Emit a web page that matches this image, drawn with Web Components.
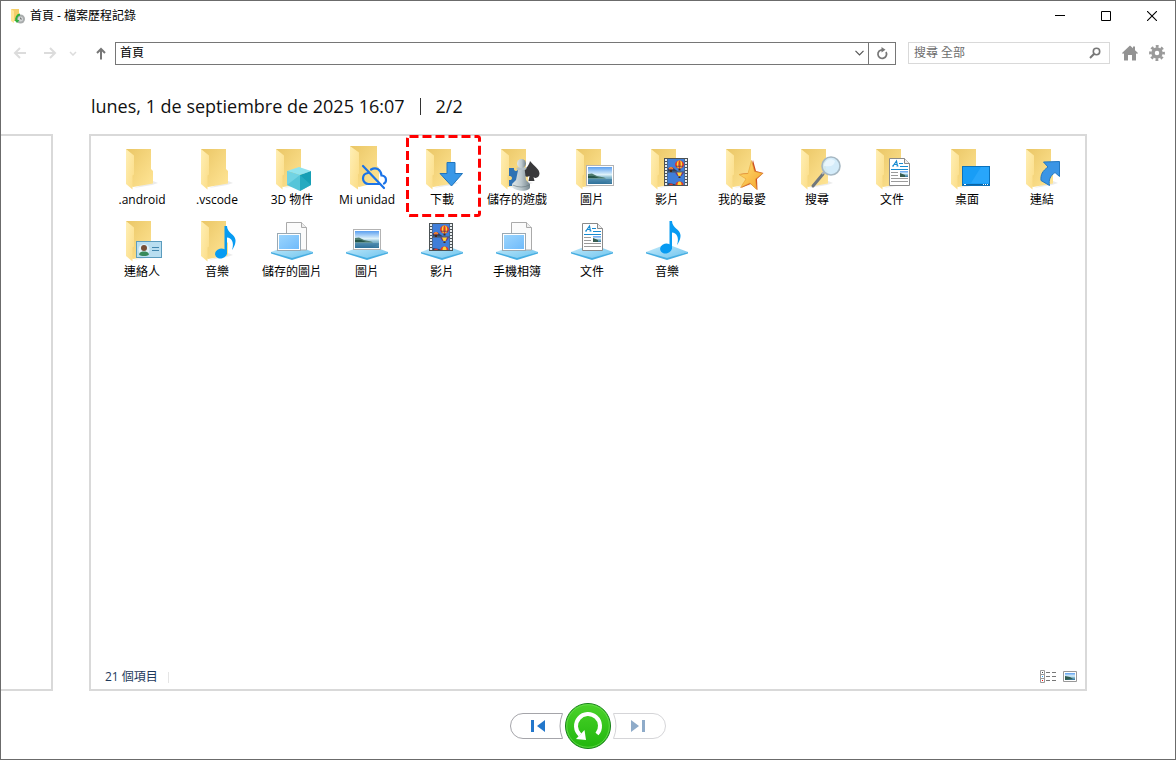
<!DOCTYPE html>
<html lang="zh-Hant">
<head>
<meta charset="utf-8">
<title>首頁 - 檔案歷程記錄</title>
<style>
html, body { margin: 0; }
body { font: 12px/16px "Open Sans", "Noto Sans CJK TC", sans-serif; color: #000; background: #fff; }
</style>
</head>
<body>
<fh-window>
  <fh-titlebar slot="title">首頁 - 檔案歷程記錄</fh-titlebar>
  <fh-toolbar slot="toolbar"></fh-toolbar>
  <fh-snapshot date="lunes, 1 de septiembre de 2025 16:07" position="2/2" count="21 個項目">
    <fh-item icon="plain">.android</fh-item>
    <fh-item icon="plain">.vscode</fh-item>
    <fh-item icon="cube">3D 物件</fh-item>
    <fh-item icon="drive">Mi unidad</fh-item>
    <fh-item icon="download" marked>下載</fh-item>
    <fh-item icon="games">儲存的遊戲</fh-item>
    <fh-item icon="pictures">圖片</fh-item>
    <fh-item icon="videos">影片</fh-item>
    <fh-item icon="star">我的最愛</fh-item>
    <fh-item icon="search">搜尋</fh-item>
    <fh-item icon="documents">文件</fh-item>
    <fh-item icon="desktop">桌面</fh-item>
    <fh-item icon="links">連結</fh-item>
    <fh-item icon="contacts">連絡人</fh-item>
    <fh-item icon="music">音樂</fh-item>
    <fh-item icon="lib-saved">儲存的圖片</fh-item>
    <fh-item icon="lib-pictures">圖片</fh-item>
    <fh-item icon="lib-videos">影片</fh-item>
    <fh-item icon="lib-saved">手機相簿</fh-item>
    <fh-item icon="lib-documents">文件</fh-item>
    <fh-item icon="lib-music">音樂</fh-item>
  </fh-snapshot>
  <fh-playback slot="footer"></fh-playback>
</fh-window>

<script>
function define(name, html, setup) {
  customElements.define(name, class extends HTMLElement {
    constructor() {
      super();
      this.attachShadow({ mode: 'open' });
    }
    connectedCallback() {
      this.shadowRoot.innerHTML = html;
      if (setup) setup(this, this.shadowRoot);
    }
  });
}

const RESET = `
  * { box-sizing: border-box; }
  svg { display: block; }
  button { display: grid; place-items: center; margin: 0; padding: 0; border: 0; background: none; font: inherit; color: inherit; }
  input { margin: 0; border: 0; background: none; font: inherit; color: inherit; outline: 0; min-width: 0; }
`;

define('fh-window', `
<style>${RESET}
  :host { display: flex; flex-direction: column; box-sizing: border-box; min-height: 100vh; border: 1px solid #6b6b6b; background: #fff; }
  main { flex: 1; display: flex; }
</style>
<slot name="title"></slot>
<slot name="toolbar"></slot>
<main><slot></slot></main>
<slot name="footer"></slot>`);

define('fh-titlebar', `
<style>${RESET}
  :host { display: flex; align-items: center; height: 30px; padding-left: 10px; }
  h1 { flex: 1; margin: 0 0 0 5px; font-size: 12px; line-height: 16px; font-weight: 400; }
  button { width: 46px; height: 28px; }
</style>
<svg width="14" height="16" viewBox="0 0 14 16">
  <path d="M0 1h8v12H1L0 12z" fill="#f4cf6a"/><path d="M0 1l3 2v12l-3-2z" fill="#ffe596"/>
  <circle cx="9.500" cy="11" r="4.500" fill="#a9acad"/><circle cx="9.500" cy="11" r="2.500" fill="#d3d6d7"/>
  <path d="M9.500 9.500V11H11" fill="none" stroke="#666" stroke-width=".8"/>
  <path d="M9 6.500a4.500 4.500 0 0 0-3.500 6" fill="none" stroke="#2fae3e" stroke-width="2"/><path d="M3.500 12h5L6 15z" fill="#2fae3e"/>
</svg>
<h1><slot></slot></h1>
<button aria-label="Minimize"><svg width="10" height="10"><path d="M0 4.500h10" stroke="#000"/></svg></button>
<button aria-label="Maximize"><svg width="10" height="10"><path d="M.5.5h9v9h-9z" fill="none" stroke="#000"/></svg></button>
<button aria-label="Close"><svg width="10" height="10"><path d="M0 0l10 10M10 0L0 10" stroke="#000" stroke-width="1.100"/></svg></button>`);

define('fh-toolbar', `
<style>${RESET}
  :host { display: flex; align-items: center; height: 44px; padding: 0 10px 0 12px; }
  .nav { display: flex; align-items: center; }
  .nav button { height: 22px; }
  .arrow { width: 14px; margin-right: 16px; }
  .more { width: 8px; margin: 0 18px 0 -4px; }
  .up { width: 12px; }
  .address { flex: 1; display: flex; height: 23px; margin-left: 8px; border: 1px solid #767676; }
  .address input { flex: 1; padding: 0 0 0 4px; }
  .address button { width: 18px; }
  .refresh { width: 28px; height: 23px; margin-left: -1px; border: 1px solid #767676; }
  .search { display: flex; width: 202px; height: 22px; margin: 0 12px; border: 1px solid #d9d9d9; }
  .search input { flex: 1; padding: 0 0 0 5px; }
  .search input::placeholder { color: #6d6d6d; opacity: 1; }
  .search button { width: 28px; }
  .tool { width: 16px; height: 22px; margin-right: 11px; }
  .tool:last-child { margin-right: 0; }
</style>
<div class="nav">
  <button class="arrow" aria-label="Back" disabled><svg width="14" height="12" fill="none" stroke="#dcdcdc" stroke-width="2"><path d="M13 6H2M7 1L2 6l5 5"/></svg></button>
  <button class="arrow" aria-label="Forward" disabled><svg width="14" height="12" fill="none" stroke="#dcdcdc" stroke-width="2"><path d="M1 6h11M7 1l5 5-5 5"/></svg></button>
  <button class="more" aria-label="Recent" disabled><svg width="8" height="5" fill="none" stroke="#dcdcdc" stroke-width="1.500"><path d="M1 1l3 3 3-3"/></svg></button>
  <button class="up" aria-label="Up"><svg width="10" height="13" fill="none" stroke="#777" stroke-width="2"><path d="M5 12.500V2M1 6l4-4 4 4"/></svg></button>
</div>
<div class="address">
  <input aria-label="Address" value="首頁">
  <button aria-label="Previous locations"><svg width="9" height="6" fill="none" stroke="#555" stroke-width="1.200"><path d="M.5.8l4 4 4-4"/></svg></button>
</div>
<button class="refresh" aria-label="Refresh"><svg width="12" height="13" fill="none" stroke="#777" stroke-width="1.700"><path d="M10 5a4.300 4.300 0 1 1-3.500-2.200"/><path d="M5.500 0v5.500L9.500 2.700z" fill="#777" stroke="none"/></svg></button>
<div class="search">
  <input type="search" aria-label="Search" placeholder="搜尋 全部">
  <button aria-label="Search"><svg width="12" height="12" fill="none" stroke="#777"><circle cx="7.500" cy="4.500" r="3.200" stroke-width="1.600"/><path d="M5.200 6.800L1 11" stroke-width="2"/></svg></button>
</div>
<button class="tool" aria-label="Home"><svg width="16" height="16" fill="#939393"><path d="M8 0.500L0 8l1 1 1-.7V15.500h4V10h4v5.500h4V8.300l1 .7 1-1-3-2.800V1.500h-2v1.700z"/></svg></button>
<button class="tool" aria-label="Settings"><svg width="16" height="16"><g fill="none" stroke="#999"><circle cx="8" cy="8" r="4" stroke-width="3.500"/><circle cx="8" cy="8" r="6.600" stroke-width="2.600" stroke-dasharray="2.800 2.384" stroke-dashoffset="1.400"/></g></svg></button>`);

const DEFS = `<defs>
  <linearGradient id="back" x1="0" y1="0" x2="1" y2="1"><stop offset="0" stop-color="#eac665"/><stop offset=".5" stop-color="#f5d67e"/><stop offset="1" stop-color="#ffe596"/></linearGradient>
  <linearGradient id="front" x1="0" y1="0" x2="1" y2="1"><stop offset="0" stop-color="#ffefb5"/><stop offset="1" stop-color="#fbdc85"/></linearGradient>
  <linearGradient id="sky" x1="0" y1="0" x2="0" y2="1"><stop offset="0" stop-color="#5b9ff0"/><stop offset=".45" stop-color="#dff2fa"/><stop offset=".6" stop-color="#8fc0d3"/><stop offset="1" stop-color="#2f7098"/></linearGradient>
  <linearGradient id="base" x1="0" y1="0" x2="1" y2="1"><stop offset="0" stop-color="#c8ecfb"/><stop offset="1" stop-color="#6bc3ee"/></linearGradient>
  <linearGradient id="blue" x1="0" y1="0" x2="1" y2="1"><stop offset="0" stop-color="#9bd5fd"/><stop offset="1" stop-color="#70bbfb"/></linearGradient>
  <linearGradient id="gold" x1="0" y1="0" x2="1" y2="1"><stop offset="0" stop-color="#ffe177"/><stop offset="1" stop-color="#f5a52c"/></linearGradient>
  <linearGradient id="pawn" x1="0" y1="0" x2="1" y2="0"><stop offset="0" stop-color="#dfe6e8"/><stop offset=".5" stop-color="#bcc8cd"/><stop offset="1" stop-color="#74848c"/></linearGradient>
</defs>`;

const folder = `<path d="M16 44l18-3 6-2-5-2z" fill="#ddd" opacity=".6"/>
  <path d="M8 5h25v20l2 2v12.500L15 43l-7-4z" fill="url(#back)"/>
  <path d="M8 5l8 6.500v19l-1.500 1V45.500L8 40z" fill="url(#front)"/>`;
const base = `<path d="M3 36l21-8 21 8-21 7z" fill="url(#base)"/><path d="M3 36l21 6 21-6v1.500L24 44 3 37.500z" fill="#46aee2"/>`;

const photo = `<rect x=".5" y=".5" width="27" height="20" fill="#fff" stroke="#b3b3b3"/>
  <rect x="2" y="2" width="24" height="17" fill="url(#sky)"/>
  <path d="M2 9l4-.5 5 2.500 7 1.500 2 1H2z" fill="#4d7a6d"/><path d="M2 14h24v2l-10 3H2z" fill="#2b6f9c" opacity=".5"/><path d="M2 11h6l5 2H2z" fill="#255448"/>`;

const film = (() => {
  let holes = '';
  for (let y = 1; y < 28; y += 3) holes += `<path d="M1 ${y}h2v2H1zM21 ${y}h2v2h-2z" fill="#e9eef0"/>`;
  const balloon = (x, y, rx, ry) => `<g transform="translate(${x} ${y})">
    <ellipse rx="${rx}" ry="${ry}" fill="#e0392b"/><ellipse rx="${rx * .6}" ry="${ry}" fill="#ffd634"/><ellipse rx="${rx * .25}" ry="${ry}" fill="#d8402a"/>
    <path d="M${-rx * .9} ${ry * .3}h${rx * 1.8}l-1 1H${1 - rx * .9}z" fill="#46306e" opacity=".7"/><path d="M-1 ${ry}h2v2h-2z" fill="#4a2b14"/></g>`;
  return `<rect width="24" height="28" fill="#4c5255"/>${holes}<rect x="3.500" y="1" width="17" height="12.500" fill="#407ed9"/><rect x="3.500" y="14.500" width="17" height="12.500" fill="#407ed9"/>
    <path d="M4 13.500v-3q4-2 6 0l4 3zM4 27v-2l6 1 3 1z" fill="#2f4560"/>
    ${balloon(15.5, 6.5, 4.5, 4)}${balloon(7, 10.5, 2.5, 1.5)}
    <path d="M11 14.500h9l-2.500 3.500h-4z" fill="#7b3272"/><path d="M13 14.500h5l-1.500 3.500h-2z" fill="#ffd634"/><path d="M14.500 18.500h2v1.500h-2z" fill="#4a2b14"/>
    <path d="M11.500 27a4 3.500 0 0 1 8 0z" fill="#e0392b"/><path d="M13.500 27a2 3.500 0 0 1 4 0z" fill="#ffd634"/><path d="M5 27a2 1.500 0 0 1 4 0z" fill="#e0392b"/>`;
})();

const page = `<path d="M.5.5h15l5 5v22H.5z" fill="#fff" stroke="#8a8a8a"/><path d="M15.500.5v5h5" fill="#eee" stroke="#8a8a8a"/>
  <path d="M4 8L7.500 3l1 5M5 6.500h3M3 8h2M7.500 8h2" fill="none" stroke="#178bd1" stroke-width="1.200"/>
  <path d="M10 5.500h4M11 8.500h8M2 11.500h17" stroke="#178bd1" fill="none"/><path d="M2 14.500h7M2 17.500h7M2 20.500h17M2 23.500h17" stroke="#9b9b9b"/>
  <rect x="11" y="13" width="8" height="6" fill="url(#sky)"/><path d="M11 15l5 2v2h-5z" fill="#375d51"/>`;

const printed = `<path d="M18.500 34V6.500h15l5 5V34z" fill="#fbfbfb" stroke="#aaa"/><path d="M33.500 6.500v5h5" fill="#eee" stroke="#aaa"/>
  <rect x="9.500" y="17.500" width="23" height="17" fill="#fff" stroke="#9aa9b3"/><rect x="11" y="19" width="20" height="14" fill="url(#blue)"/>`;

const note = `<ellipse cx="6" cy="27.500" rx="6" ry="5" transform="rotate(-15 6 27.500)"/><path d="M9.500 0h2.500c0 7 8 8 8.500 14 .3 4-2 8-3.500 10 2.500-8-.5-12-5-12.500V28H9.500z"/>`;

const at = (x, y, art, extra = '') => `<g transform="translate(${x} ${y})" ${extra}>${art}</g>`;

const ICONS = {
  plain: folder,
  cube: folder + `<path d="M19 27l12-4 12 4-11 4z" fill="#91e4ef"/><path d="M19 27l13 4v16l-13-6z" fill="#56c5d9"/><path d="M32 31l11-4v14l-11 6z" fill="#169fb5"/><path d="M19 27l13 4-13 10z" fill="#83dcea" opacity=".6"/><path d="M32 31l11 10-11 6z" fill="#31b3c8" opacity=".6"/>`,
  drive: `<path d="M7 2h27v20l2 2v14L16 43l-9-4z" fill="url(#back)"/><path d="M7 2l9 6.500v21l-1 1V45.500L7 40z" fill="url(#front)"/>
    <g fill="none" stroke="#1a73e8" stroke-width="2.200" stroke-linecap="round"><path d="M25 29c-3 .3-5 2.500-5 5.500s2.500 5.500 5.500 5.500H37M28 25.500c5-3 10 0 10.500 6 3 .3 4.500 2 4.500 4.500 0 1.500-.7 3-2 3.500"/><path d="M20 22l21 22"/></g>`,
  download: folder + `<path d="M29 18.500h8v11h7.500L33.500 42 22 29.500h7z" fill="#3998e8" stroke="#2175bd"/>`,
  games: folder + `<path d="M16 24h5c-1 4 5 4 4 0h5v18h-5c1-4-5-4-4 0h-5v-6c4 1 4-5 0-4z" fill="#2f72b3"/>
    <path d="M37 17c4 5 9.500 8 9.500 12.500 0 4-4 5.500-6 3.500l1 4h-6l1-5c-3 2-6 0-6-3 0-4 5.500-6 6.500-12z" fill="#39393b"/>
    <path d="M25.500 24h6l1.500 12 4 4v3c0 5-14 5-18 0v-3l4-4z" fill="url(#pawn)"/><ellipse cx="28.500" cy="24.500" rx="5" ry="1.500" fill="#b5c1c7"/><circle cx="28.500" cy="19.500" r="4.500" fill="url(#pawn)"/>
    <path d="M19.500 41q9 4 17 0" fill="none" stroke="#64747c" opacity=".6"/>`,
  pictures: folder + at(18, 21, photo),
  videos: folder + at(21, 14, film),
  star: folder + `<path d="M35 16l3 11 7.500 2-6.500 6 .5 11-7-6-9.500 4 5.500-9-6.500-5 9.500-1z" fill="#cc4c20"/><path d="M33.500 16.500l3 11 8 2-7 5.500 1 10.500-6.500-6.500-9.500 4.500 5.500-8.500-7-4.500 9-1z" fill="url(#gold)" stroke="#e6a236" stroke-width=".6"/>`,
  search: folder + `<path d="M20 42l10-12" stroke="#6f777d" stroke-width="3" stroke-linecap="round"/><path d="M29 30l3-3" stroke="#b2b8bb" stroke-width="2"/><circle cx="38" cy="22" r="9" fill="#cfeafa" fill-opacity=".9" stroke="#a6b8c3" stroke-width="1.600"/><path d="M31 22c0-5 6-9 11-5-1 5-5 6-11 5z" fill="#eef9ff" opacity=".8"/>`,
  documents: folder + at(21, 14, page),
  desktop: folder + `<rect x="19.500" y="22.500" width="27" height="19" fill="#189df6" stroke="#0b72bc"/><path d="M38 23h8v16H28z" fill="#38b0ff" opacity=".5"/><path d="M20 40.500h26" stroke="#0b64a3"/><path d="M21 40.500h2M40 40.500h1M42 40.500h1M44 40.500h1" stroke="#fff"/>`,
  links: folder + `<path d="M25.500 18l16-.5v15L37 28.500c-5 3.500-6.500 7.500-5.500 13L23 36.500c-.5-6 1.500-9.500 7-13.500z" fill="#3b95e5" stroke="#2478c0"/>`,
  contacts: folder + `<rect x="18.500" y="25.500" width="25" height="16" fill="#b9def0" stroke="#5b9cbe"/><circle cx="26" cy="33.500" r="5.500" fill="#e0f2fa"/><path d="M21 38.500c1-3 3-3 5-3s4 0 5 3c-2 2-8 2-10 0z" fill="#388a5c"/><circle cx="26" cy="32" r="3" fill="#775037"/><path d="M34 31.500h7M34 34.500h7" stroke="#4387ae"/>`,
  music: folder + at(22, 10, note, 'fill="#079bf2"'),
  'lib-saved': base + printed,
  'lib-pictures': base + at(10, 13, photo),
  'lib-videos': base + at(11, 7, film),
  'lib-documents': base + at(14, 7, page),
  'lib-music': base + at(17, 5, note, 'fill="#079bf2"')
};

define('fh-item', `
<style>${RESET}
  :host { display: block; position: relative; width: 74px; }
  button { display: flex; flex-direction: column; align-items: center; width: 100%; }
  span { white-space: nowrap; line-height: 16px; }
  .mark { display: none; position: absolute; left: 1px; top: -9px; pointer-events: none; }
  :host([marked]) .mark { display: block; }
</style>
<button><svg class="icon" width="48" height="48"></svg><span><slot></slot></span></button>
<svg class="mark" width="75" height="82"><rect x="1.500" y="1.500" width="72" height="79" rx="2" fill="none" stroke="#f00" stroke-width="3" stroke-dasharray="9 4"/></svg>`,
(host, root) => { root.querySelector('.icon').innerHTML = DEFS + ICONS[host.getAttribute('icon')]; });

define('fh-snapshot', `
<style>${RESET}
  :host { flex: 1; display: grid; grid-template: 59px 1fr / 52px 1fr; column-gap: 36px; padding-right: 88px; }
  h2 { grid-column: 2; display: flex; gap: 15px; align-items: center; margin: 0; padding: 0 0 0 2px; height: 62px; font-size: 18px; line-height: 24px; font-weight: 400; color: #111; white-space: nowrap; }
  i { width: 1px; height: 17px; background: #333; }
  .previous { border: solid #d9d9d9; border-width: 2px 2px 2px 0; }
  section { display: flex; flex-direction: column; border: 2px solid #d9d9d9; }
  .items { flex: 1; display: grid; grid-template-columns: repeat(auto-fill, 75px); align-content: start; row-gap: 8px; padding: 8px 0 0 14px; }
  footer { display: flex; align-items: center; gap: 7px; height: 24px; padding: 0 8px 0 14px; color: #1e395b; }
  footer span { flex: 1; }
  footer b { display: inline-block; vertical-align: middle; width: 1px; height: 11px; margin-left: 10px; background: #e5e5e5; }
</style>
<h2><span class="date"></span><i></i><span class="position"></span></h2>
<div class="previous"></div>
<section>
  <div class="items"><slot></slot></div>
  <footer>
    <span><span class="count"></span><b></b></span>
    <button aria-label="Details"><svg width="16" height="14"><g fill="#fff" stroke="#999"><path d="M.5.5h4v4h-4zM.5 4.500h4v4h-4zM.5 8.500h4v4h-4z"/></g><path d="M6 2.500h4M12 2.500h4M6 6.500h4M12 6.500h4M6 10.500h4M12 10.500h4" stroke="#777"/><path d="M2 2h1v1H2z" fill="#444"/><path d="M2 6h1v1H2z" fill="#18a0ff"/><path d="M2 10h1v1H2z" fill="red"/></svg></button>
    <button aria-label="Large icons"><svg width="14" height="12">${DEFS}<path d="M.5.5h13v10H.5z" fill="#fff" stroke="#999"/><path d="M2 2h10v7H2z" fill="url(#sky)"/><path d="M2 5l5 1 3 2-8 1z" fill="#315d51"/></svg></button>
  </footer>
</section>`,
(host, root) => {
  for (const key of ['date', 'position', 'count']) root.querySelector('.' + key).textContent = host.getAttribute(key);
});

define('fh-playback', `
<style>${RESET}
  :host { display: flex; justify-content: center; align-items: center; box-sizing: border-box; height: 68px; padding-top: 2px; }
  .restore { margin: 0 2px; }
</style>
<button aria-label="Previous version"><svg width="53" height="26"><path d="M52.500.5H13a12.500 12.500 0 0 0 0 25h39.500q-5-12.500 0-25z" fill="#fff" stroke="#a5a5aa"/><path d="M21 7h3v12h-3zM35 7v12l-8-6z" fill="#2377cb"/></svg></button>
<button class="restore" aria-label="Restore"><svg width="46" height="46"><defs><linearGradient id="g" x1="0" y1="0" x2="0" y2="1"><stop offset="0" stop-color="#4bd32a"/><stop offset="1" stop-color="#20b60d"/></linearGradient></defs>
<circle cx="23" cy="23" r="22.500" fill="url(#g)" stroke="#168018"/><circle cx="23" cy="23" r="21.300" fill="none" stroke="#6bdd50" stroke-width=".8"/>
<path d="M32 31A12 12 0 1 0 15 32" fill="none" stroke="#fff" stroke-width="4"/><path d="M11 36l10 1-1.500-10z" fill="#fff"/></svg></button>
<button aria-label="Next version" disabled><svg width="53" height="26"><path d="M.5.5H40a12.500 12.500 0 0 1 0 25H.5q5-12.500 0-25z" fill="#fff" stroke="#d5d5d8"/><path d="M29 7h3v12h-3zM18 7v12l8-6z" fill="#8eabc9"/></svg></button>`);
</script>
</body>
</html>
